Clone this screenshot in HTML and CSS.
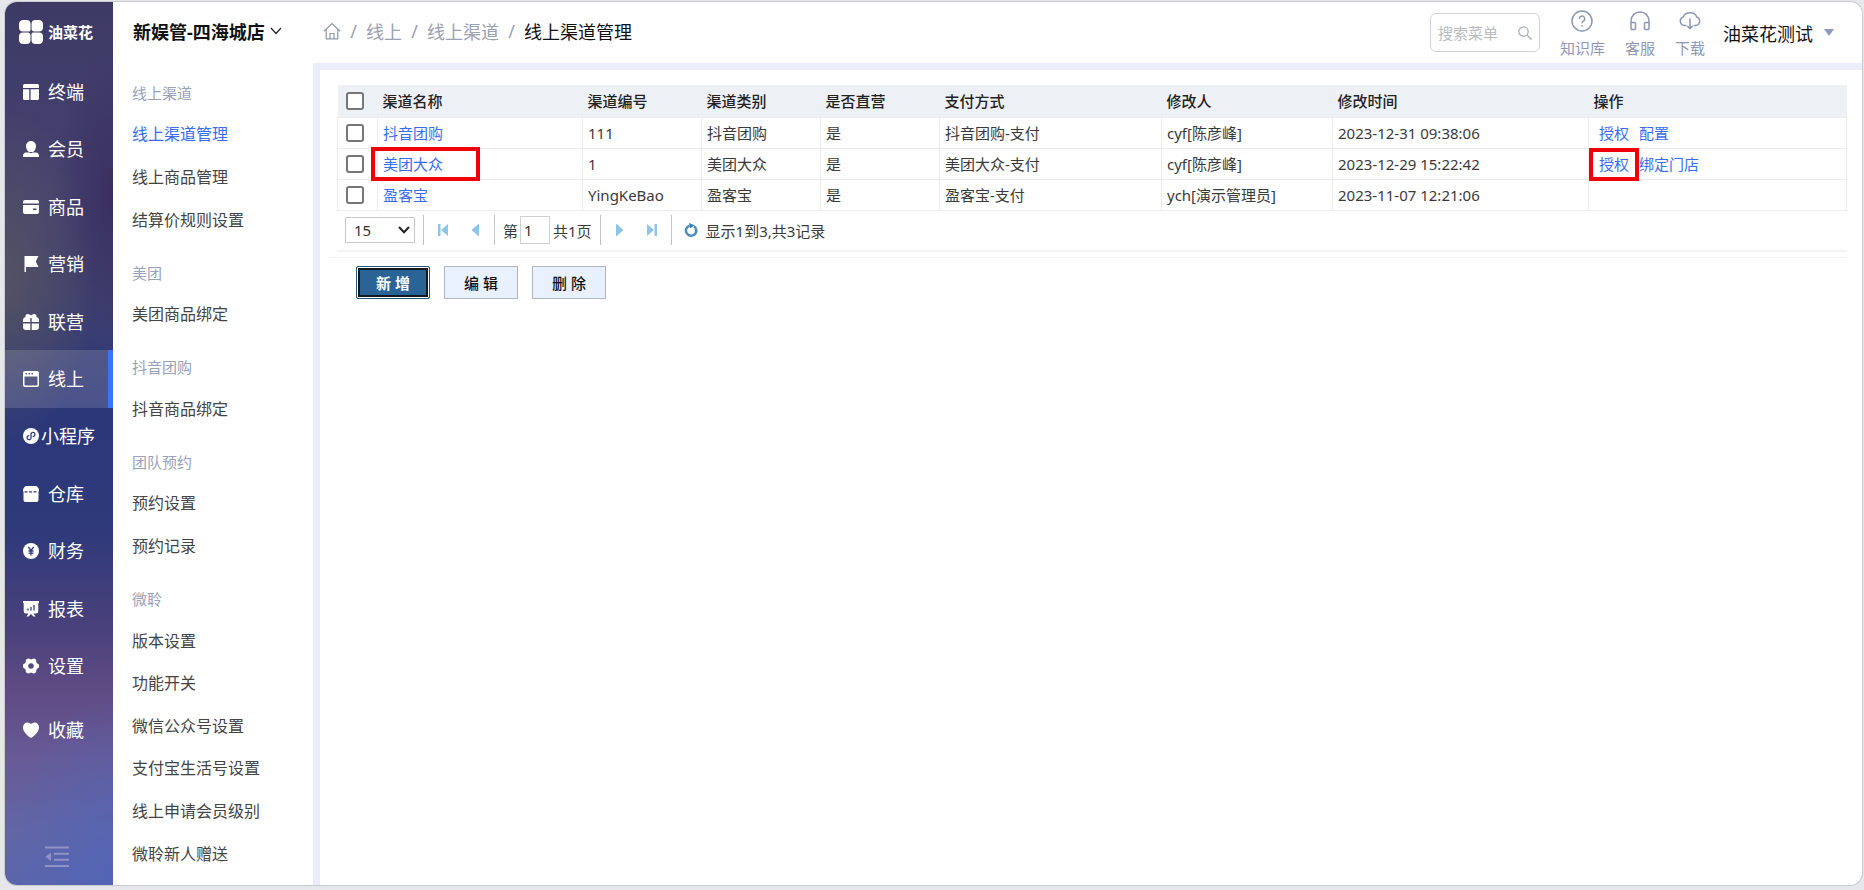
FILE: index.html
```html
<!DOCTYPE html>
<html lang="zh-CN">
<head>
<meta charset="utf-8">
<title>线上渠道管理</title>
<link rel="stylesheet" href="styles.css">
</head>
<body>
<div class="window">
  <aside class="sidebar">
    <div class="brand">
      <svg class="brand-mark" viewBox="0 0 24 24" aria-hidden="true"><path fill="#fff" d="M4.500 0H7.500Q11.500 0 11.500 4V10Q11.500 11.500 10 11.500H4Q0 11.500 0 7.500V4.500Q0 0 4.500 0ZM16.500 0H19.500Q24 0 24 4.500V7.500Q24 11.500 20 11.500H14.500Q12.500 10.800 12.500 9V4Q12.500 0 16.500 0ZM4 12.500H9.500Q11.500 13.200 11.500 15V20Q11.500 24 7.500 24H4.500Q0 24 0 19.500V16.500Q0 12.500 4 12.500ZM14 12.500H20Q24 12.500 24 16.500V19.500Q24 24 19.500 24H16.500Q12.500 24 12.500 20V14Q12.500 12.500 14 12.500Z"/></svg>
      <span class="brand-name">油菜花</span>
    </div>
    <nav class="modules" aria-label="模块">
      <a class="module" href="#"><svg class="icon" viewBox="0 0 16 16"><path d="M1.500 0h13A1.500 1.500 0 0 1 16 1.500V4H0V1.500A1.500 1.500 0 0 1 1.500 0ZM0 5.300h6.300V16H1.500A1.500 1.500 0 0 1 0 14.500ZM7.600 5.300H16v9.200a1.500 1.500 0 0 1-1.500 1.500H7.600Z"/></svg><span>终端</span></a>
      <a class="module" href="#"><svg class="icon" viewBox="0 0 16 16"><path d="M8 0a5 5 0 0 1 5 5c0 3-1.800 5.600-3 6H6C4.800 10.600 3 8 3 5a5 5 0 0 1 5-5ZM2.500 11.500h3.800l1.700.8 1.700-.8h3.800Q16 12 16 15v1H0v-1q0-3 2.500-3.500Z"/></svg><span>会员</span></a>
      <a class="module" href="#"><svg class="icon" viewBox="0 0 16 16"><path fill-rule="evenodd" d="M2 1h12a2 2 0 0 1 2 2v1.500H0V3a2 2 0 0 1 2-2ZM0 6h16v7a2 2 0 0 1-2 2H2a2 2 0 0 1-2-2ZM10 9.500V11h3.500V9.500Z"/></svg><span>商品</span></a>
      <a class="module" href="#"><svg class="icon" viewBox="0 0 16 16"><path d="M1.500 0H15.500L12.800 5.500L15.500 11H3V16H1.500Z"/></svg><span>营销</span></a>
      <a class="module" href="#"><svg class="icon" viewBox="0 0 16 16"><path d="M2.500 3Q2 .3 4.800 0Q7 0 8 1.500Q9 0 11.200 0Q14 .3 13.500 3Q16 3.500 16 6V8H8.700V4H7.300V8H0V6Q0 3.500 2.500 3ZM0 9.500H7.300V16H3Q0 16 0 13ZM8.700 9.500H16V13Q16 16 13 16H8.700Z"/></svg><span>联营</span></a>
      <a class="module module-current" href="#" aria-current="page"><svg class="icon" viewBox="0 0 16 16"><path fill-rule="evenodd" d="M2 0h12a2 2 0 0 1 2 2v12a2 2 0 0 1-2 2H2a2 2 0 0 1-2-2V2A2 2 0 0 1 2 0ZM1.500 5.500v8q0 1 1 1h11q1 0 1-1v-8ZM2.500 2v1.600H4V2ZM5.500 2v1.600H7V2ZM8.500 2v1.600H10V2Z"/></svg><span>线上</span></a>
      <a class="module module-tight" href="#"><svg class="icon" viewBox="0 0 16 16"><circle cx="8" cy="8" r="8"/><path class="cut" d="M6.300 7.700a2 2 0 1 0 1.700 2.200V6.100a2 2 0 1 1 1.700 2.200"/></svg><span>小程序</span></a>
      <a class="module" href="#"><svg class="icon" viewBox="0 0 16 16"><path d="M3 0h10q3 1.500 3 4.500v1H0v-1Q0 1.500 3 0ZM1 5h14q.5 0 .5.500V14a2 2 0 0 1-2 2h-11a2 2 0 0 1-2-2V5.500Q.5 5 1 5Z"/><path class="cut" stroke-dasharray="3 1.500" d="M1.500 5.800H15"/></svg><span>仓库</span></a>
      <a class="module" href="#"><svg class="icon" viewBox="0 0 16 16"><circle cx="8" cy="8" r="8"/><path class="cut" d="M5.300 4 8 7.500 10.700 4M8 7.500V12.500M5.500 8h5M5.500 10.200h5"/></svg><span>财务</span></a>
      <a class="module" href="#"><svg class="icon" viewBox="0 0 16 16"><path d="M0 0H16V2H15.300V10Q15.300 12.500 13 12.500H10.500L12.500 15.500H10.500L8 13L5.500 15.500H3.500L5.500 12.500H3Q.7 12.500.7 10V2H0Z"/><path class="cut" d="M5 9.500V7.500M8 9.500V6M11 9.500V4"/></svg><span>报表</span></a>
      <a class="module" href="#"><svg class="icon" viewBox="0 0 16 16"><path fill-rule="evenodd" d="M5 .5Q6.300.3 7 1.200H9Q9.700.3 11 .5L12.800 1.500Q13.500 2.500 13.200 3.700L14 5.200Q16 5.700 16 7V9Q16 10.300 14 10.800L13.200 12.300Q13.500 13.500 12.800 14.500L11 15.500Q9.700 15.700 9 14.800H7Q6.300 15.700 5 15.500L3.200 14.500Q2.500 13.500 2.800 12.300L2 10.800Q0 10.300 0 9V7Q0 5.700 2 5.200L2.800 3.700Q2.500 2.500 3.200 1.500ZM8 5.200a2.800 2.800 0 1 0 .01 0Z"/></svg><span>设置</span></a>
    </nav>
    <a class="module module-favourite" href="#"><svg class="icon" viewBox="0 0 16 16"><path d="M8 16C5.500 14.500 0 10.500 0 5.500C0 2.500 2 .5 4.300.5Q6.800.5 8 2Q9.200.5 11.700.5C14 .5 16 2.500 16 5.500C16 10.500 10.500 14.500 8 16Z"/></svg><span>收藏</span></a>
    <div class="sidebar-foot">
      <button class="collapse" type="button" aria-label="收起菜单"><svg viewBox="0 0 24 22"><path d="M0 1.500H24M9 7.700H24M9 13.700H24M0 20H24" stroke="#8d93c6" stroke-width="2"/><path d="M6 6.500V15L.5 10.700Z" fill="#8d93c6"/></svg></button>
    </div>
  </aside>

  <div class="workspace">
    <header class="topbar">
      <button class="store" type="button">新娱管-四海城店<svg class="store-arrow" viewBox="0 0 12 8"><path d="M1 1 6 6.500 11 1" fill="none" stroke="#222" stroke-width="1.200"/></svg></button>
      <nav class="crumbs" aria-label="面包屑">
        <a href="#" aria-label="首页"><svg class="home" viewBox="0 0 18 18"><path d="M1 9.200 9 1.500l8 7.700M3.200 8v8.800h11.600V8M7 16.800v-5.300h4v5.300" fill="none" stroke="#8f96a8" stroke-width="1.200"/></svg></a>
        <span class="slash">/</span><a href="#">线上</a>
        <span class="slash">/</span><a href="#">线上渠道</a>
        <span class="slash">/</span><span class="here">线上渠道管理</span>
      </nav>
      <div class="tools">
        <label class="search"><input class="search-input" type="text" placeholder="搜索菜单" aria-label="搜索菜单"><svg class="lens" viewBox="0 0 14 14"><circle cx="5.500" cy="5.500" r="4.700"/><path d="m9 9 4.500 4.500"/></svg></label>
        <a class="tool" href="#"><svg viewBox="0 0 22 22"><circle cx="11" cy="11" r="10"/><path d="M8.300 8.800a2.700 2.700 0 1 1 4 2.400Q11 12 11 13.300M11 15v1.500"/></svg>知识库</a>
        <a class="tool" href="#"><svg viewBox="0 0 22 22"><path d="M2 19.500V11a9 9 0 0 1 18 0v8.500M2 12.500h3.500q1 0 1 1v5q0 1-1 1H2M20 12.500h-3.500q-1 0-1 1v5q0 1 1 1H20"/></svg>客服</a>
        <a class="tool" href="#"><svg viewBox="0 0 22 22"><path d="M7.500 15.500H5A4.400 4.400 0 0 1 4.300 7Q5.500 2.700 11 2.700T17.700 7A4.400 4.400 0 0 1 17 15.500H14.500M11 8.500V18.500M8.300 16 11 18.700 13.700 16"/></svg>下载</a>
        <button class="user" type="button">油菜花测试<svg class="user-arrow" viewBox="0 0 10 7"><path d="M0 0H10L5 7Z" fill="#8f99ba"/></svg></button>
      </div>
    </header>

    <div class="body">
      <nav class="submenu" aria-label="线上">
        <h2 class="group">线上渠道</h2>
        <a class="entry entry-current" href="#" aria-current="page">线上渠道管理</a>
        <a class="entry" href="#">线上商品管理</a>
        <a class="entry" href="#">结算价规则设置</a>
        <h2 class="group">美团</h2>
        <a class="entry" href="#">美团商品绑定</a>
        <h2 class="group">抖音团购</h2>
        <a class="entry" href="#">抖音商品绑定</a>
        <h2 class="group">团队预约</h2>
        <a class="entry" href="#">预约设置</a>
        <a class="entry" href="#">预约记录</a>
        <h2 class="group">微聆</h2>
        <a class="entry" href="#">版本设置</a>
        <a class="entry" href="#">功能开关</a>
        <a class="entry" href="#">微信公众号设置</a>
        <a class="entry" href="#">支付宝生活号设置</a>
        <a class="entry" href="#">线上申请会员级别</a>
        <a class="entry" href="#">微聆新人赠送</a>
      </nav>

      <main class="content">
        <table class="grid">
          <colgroup><col class="c-check"><col class="c-name"><col class="c-type"><col class="c-type"><col class="c-type"><col class="c-pay"><col class="c-user"><col class="c-time"><col></colgroup>
          <thead>
            <tr><th><input class="tick" type="checkbox" aria-label="全选"></th><th>渠道名称</th><th>渠道编号</th><th>渠道类别</th><th>是否直营</th><th>支付方式</th><th>修改人</th><th>修改时间</th><th>操作</th></tr>
          </thead>
          <tbody>
            <tr><td><input class="tick" type="checkbox" aria-label="选择抖音团购"></td><td><a href="#">抖音团购</a></td><td>111</td><td>抖音团购</td><td>是</td><td>抖音团购-支付</td><td>cyf[陈彦峰]</td><td>2023-12-31 09:38:06</td><td class="actions"><a href="#">授权</a><a href="#">配置</a></td></tr>
            <tr><td><input class="tick" type="checkbox" aria-label="选择美团大众"></td><td><a class="marked" href="#">美团大众<span class="mark mark-name"></span></a></td><td>1</td><td>美团大众</td><td>是</td><td>美团大众-支付</td><td>cyf[陈彦峰]</td><td>2023-12-29 15:22:42</td><td class="actions"><a class="marked" href="#">授权<span class="mark mark-action"></span></a><a href="#">绑定门店</a></td></tr>
            <tr><td><input class="tick" type="checkbox" aria-label="选择盈客宝"></td><td><a href="#">盈客宝</a></td><td>YingKeBao</td><td>盈客宝</td><td>是</td><td>盈客宝-支付</td><td>ych[演示管理员]</td><td>2023-11-07 12:21:06</td><td class="actions"></td></tr>
          </tbody>
        </table>

        <div class="pager">
          <div class="size"><select aria-label="每页条数"><option>15</option></select><svg class="size-arrow" viewBox="0 0 12 8"><path d="M1 1 6 6.200 11 1" fill="none" stroke="#222" stroke-width="2"/></svg></div>
          <span class="bar"></span>
          <button class="step" type="button" aria-label="首页"><svg viewBox="0 0 14 14"><path d="M2 1H4.500V13H2ZM12 1V13L5 7Z"/></svg></button>
          <button class="step" type="button" aria-label="上一页"><svg viewBox="0 0 14 14"><path d="M11 .5V13.500L3.500 7Z"/></svg></button>
          <span class="bar"></span>
          <label class="page">第<input class="page-input" type="text" value="1"></label><span class="page-total">共1页</span>
          <span class="bar"></span>
          <button class="step" type="button" aria-label="下一页"><svg viewBox="0 0 14 14"><path d="M3 .5V13.500L10.500 7Z"/></svg></button>
          <button class="step" type="button" aria-label="末页"><svg viewBox="0 0 14 14"><path d="M12 1H9.500V13H12ZM2 1V13L9 7Z"/></svg></button>
          <span class="bar"></span>
          <button class="step step-reload" type="button" aria-label="刷新"><svg viewBox="0 0 14 14"><path d="M10 3.200A5.200 5.200 0 1 1 5.500 2.600" fill="none" stroke="#4a8fc0" stroke-width="2.500"/><path d="M5 0 10.500 2.200 6 5.500Z" fill="#2f7fb8"/></svg></button>
          <span>显示1到3,共3记录</span>
        </div>

        <div class="commands">
          <button class="command command-primary" type="button">新 增</button>
          <button class="command" type="button">编 辑</button>
          <button class="command" type="button">删 除</button>
        </div>
      </main>
    </div>
  </div>
</div>
</body>
</html>
```
FILE: styles.css
```css
* { box-sizing: border-box; }

body {
  margin: 0;
  height: 100vh;
  padding: 2px 2px 5px 5px;
  background: #e6e7ea;
  font-family: "Noto Sans", "Noto Sans CJK SC", sans-serif;
  font-size: 15px;
  color: #3a3a3a;
}

a { color: inherit; text-decoration: none; }

button {
  padding: 0;
  border: 0;
  background: none;
  color: inherit;
  font: inherit;
}

svg { display: block; flex: none; }

.window {
  display: flex;
  height: 100%;
  overflow: hidden;
  border-radius: 12px;
  background: #fff;
  box-shadow: 0 0 0 1px #c9cbcd;
}

/* Module sidebar */
.sidebar {
  display: flex;
  flex: none;
  flex-direction: column;
  width: 108px;
  color: #fff;
  background:
    radial-gradient(ellipse 110px 190px at 100% 100%, rgba(80, 100, 184, .8), rgba(80, 100, 184, 0)),
    radial-gradient(ellipse 90px 170px at 0 31%, rgba(86, 84, 98, .9), rgba(86, 84, 98, 0)),
    radial-gradient(ellipse 60px 150px at 100% 22%, rgba(54, 44, 92, .8), rgba(54, 44, 92, 0)),
    linear-gradient(180deg, #3d3b66 0%, #46406f 20%, #3e4070 34%, #2b3779 47%, #2f3a7a 60%, #47407a 70%, #5f4b84 78%, #675b96 86%, #6266a4 94%, #5b66aa 100%);
}

.brand {
  display: flex;
  align-items: center;
  gap: 5px;
  height: 61px;
  padding: 0 0 2px 14px;
}

.brand-mark { width: 24px; height: 24px; }
.brand-name { font-size: 15px; font-weight: 700; }

.modules {
  display: flex;
  flex: 1;
  flex-direction: column;
}

.module {
  display: flex;
  flex: 1;
  align-items: center;
  gap: 9px;
  padding-left: 18px;
  font-size: 18px;
  line-height: 24px;
}

.module-tight { gap: 2px; }
.module-favourite { flex: none; height: 58px; margin-top: 6px; }

.module-current {
  border-right: 5px solid #3b74fb;
  background: rgba(255, 255, 255, .14);
}

.icon { width: 16px; height: 16px; fill: #fff; }
.cut { fill: none; stroke: #333c78; stroke-width: 1.300; }

.sidebar-foot {
  height: 126px;
  padding: 87px 0 0 40px;
}

.collapse { width: 24px; height: 22px; }

/* Top bar */
.workspace {
  display: flex;
  flex: 1;
  flex-direction: column;
  min-width: 0;
}

.topbar {
  display: flex;
  flex: none;
  align-items: center;
  height: 61px;
  font-size: 18px;
}

.store {
  display: flex;
  align-items: center;
  gap: 5px;
  width: 210px;
  padding: 0 0 4px 20px;
  color: #111;
  font-weight: 700;
  white-space: nowrap;
}

.store-arrow { width: 12px; height: 8px; }

.crumbs {
  display: flex;
  align-items: center;
  gap: 9px;
  padding-bottom: 4px;
  color: #9aa1b3;
  white-space: nowrap;
}

.home { width: 18px; height: 18px; }
.slash { width: 7px; text-align: center; }
.here { color: #111; }

.tools {
  display: flex;
  align-items: center;
  gap: 20px;
  margin-left: auto;
  padding-right: 28px;
}

.search {
  display: flex;
  align-items: center;
  width: 110px;
  height: 39px;
  padding: 0 7px;
  border: 1px solid #cfd2d8;
  border-radius: 6px;
}

.search-input {
  flex: 1;
  min-width: 0;
  padding: 0;
  border: 0;
  outline: 0;
  background: none;
  font: inherit;
  font-size: 15px;
}

.search-input::placeholder { color: #b9bbbf; }

.lens {
  width: 14px;
  height: 14px;
  fill: none;
  stroke: #a9adb8;
  stroke-width: 1.300;
}

.tool {
  display: flex;
  flex-direction: column;
  align-items: center;
  gap: 6px;
  padding-top: 2px;
  color: #8e97b3;
  font-size: 15px;
  line-height: 20px;
}

.tool svg {
  width: 22px;
  height: 22px;
  fill: none;
  stroke: #8e97b3;
  stroke-width: 1.500;
}

.user {
  display: flex;
  align-items: center;
  gap: 11px;
  margin-left: -2px;
  color: #111;
}

.user-arrow { width: 10px; height: 7px; }

/* Section menu */
.body {
  display: flex;
  flex: 1;
  min-height: 0;
}

.submenu {
  display: flex;
  flex: none;
  flex-direction: column;
  width: 200px;
  padding: 10px 0 10px 19px;
}

.group {
  flex: none;
  margin: 0;
  color: #98a2b8;
  font-size: 15px;
  font-weight: 400;
  line-height: 40px;
}

.entry + .group { margin-top: 12px; }

.entry {
  display: flex;
  flex: 1;
  align-items: center;
  color: #444;
  font-size: 16px;
  line-height: 20px;
}

.entry-current { color: #3a6cf0; }

/* Channel list */
.content {
  flex: 1;
  min-width: 0;
  border-top: 7px solid #ebeefa;
  border-left: 7px solid #ebeefa;
  padding: 15px 15px 0 17px;
}

.grid {
  width: 100%;
  table-layout: fixed;
  border-collapse: collapse;
}

.c-check { width: 40px; }
.c-name { width: 205px; }
.c-type { width: 119px; }
.c-pay { width: 222px; }
.c-user { width: 171px; }
.c-time { width: 256px; }

.grid th,
.grid td {
  padding: 0 0 0 5px;
  text-align: left;
  white-space: nowrap;
  line-height: 20px;
}

.grid th { height: 32px; background: #edf0f5; font-weight: 500; color: #222; }
.grid td { height: 31px; border: 1px solid #ededee; }
.grid td a { color: #3a6cf0; }
.grid .actions { padding-left: 10px; }
.actions a + a { margin-left: 10px; }

.grid th:first-child,
.grid td:first-child { padding-left: 8px; }

.tick {
  display: block;
  width: 18px;
  height: 18px;
  margin: 0;
  appearance: none;
  border: 2px solid #767676;
  border-radius: 3px;
  background: #fff;
}

/* Highlight frames drawn over the cells */
.marked { position: relative; }

.mark {
  position: absolute;
  border: 4px solid #f00008;
}

.mark-name { top: -7px; right: -37px; bottom: -7px; left: -12px; }
.mark-action { top: -6px; right: -10px; bottom: -7px; left: -10px; }

/* Pager */
.pager {
  display: flex;
  align-items: center;
  height: 41px;
  padding-left: 8px;
  border-bottom: 2px solid #f3f3f4;
}

.size { position: relative; }

.size select {
  display: block;
  width: 70px;
  height: 26px;
  padding: 0 8px;
  appearance: none;
  border: 1px solid #c8c8c8;
  border-radius: 0;
  background: #fff;
  color: #333;
  font: inherit;
}

.size-arrow {
  position: absolute;
  top: 9px;
  right: 5px;
  width: 12px;
  height: 8px;
  pointer-events: none;
}

.bar {
  width: 1px;
  height: 30px;
  margin: 0 8px;
  background: #c4c4c6;
}

.step {
  width: 22px;
  height: 22px;
  padding: 4px;
}

.step + .step { margin-left: 10px; }
.step svg { width: 14px; height: 14px; fill: #8cc4ea; }
.step-reload { margin-right: 4px; }

.page { display: flex; align-items: center; gap: 2px; }

.page-input {
  width: 30px;
  height: 28px;
  padding: 0 3px;
  border: 1px solid #d0d0d0;
  color: #333;
  font: inherit;
}

.page-total { margin-left: 3px; }

/* Commands */
.commands {
  display: flex;
  gap: 14px;
  margin: 5px 0 0 -8px;
  padding: 8px 0 0 27px;
  border-top: 1px solid #f5f5f5;
}

.command {
  width: 74px;
  height: 33px;
  border: 1px solid #b0b5c4;
  background: #e9f0fe;
  color: #111;
  font-weight: 500;
}

.command-primary {
  border: 1px solid #2b567c;
  outline: 2px solid #101820;
  outline-offset: -4px;
  box-shadow: inset 0 0 0 2px #fff;
  border-radius: 2px;
  background: #2a6496;
  color: #fff;
  font-weight: 700;
}
```
